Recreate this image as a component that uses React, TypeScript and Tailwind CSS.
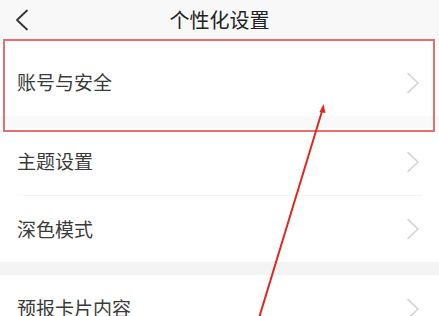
import React from "react";

const Chevron = () => (
  <svg width="14" height="22" viewBox="0 0 14 22" className="mr-[19px]">
    <path d="M2 1.5 L12 11 L2 20.5" fill="none" stroke="#d2d2d2" strokeWidth="1.6" strokeLinecap="round" strokeLinejoin="round" />
  </svg>
);

const Row = ({ label, h = "h-[67px]" }: { label: string; h?: string }) => (
  <div className={`flex items-center justify-between bg-white ${h}`}>
    <span className="pl-[17px] text-[19px] text-[#3a3a3a]">{label}</span>
    <Chevron />
  </div>
);

export default function App() {
  return (
    <div
      className="relative w-[439px] h-[316px] overflow-hidden bg-white"
      style={{ fontFamily: '"Noto Sans CJK SC", "Noto Sans", sans-serif' }}
    >
      <div className="relative flex h-[39px] items-center justify-center bg-[#f8f8f8]">
        <svg width="14" height="22" viewBox="0 0 14 22" className="absolute left-[15px] top-[9px]">
          <path d="M12 1.5 L2 11 L12 20.5" fill="none" stroke="#333" strokeWidth="1.8" strokeLinecap="round" strokeLinejoin="round" />
        </svg>
        <span className="text-[20px] text-[#222222]">个性化设置</span>
      </div>
      <div className="flex flex-col">
        <div className="flex items-center justify-between bg-white h-[77px] pt-[10px]">
          <span className="pl-[17px] text-[19px] text-[#3a3a3a]">账号与安全</span>
          <Chevron />
        </div>
        <div className="h-[12px] bg-[#f9f9f9]" />
        <Row label="主题设置" />
        <div className="mx-[17px] h-px bg-[#f3f3f3]" />
        <Row label="深色模式" h="h-[66px]" />
        <div className="h-[13px] bg-[#f4f4f4]" />
        <Row label="预报卡片内容" />
      </div>

      {/* annotation overlay */}
      <div className="absolute left-[3px] top-[39px] h-[93px] w-[432px] border-2 border-[#e27070]" />
      <svg className="absolute left-0 top-0" width="439" height="316" viewBox="0 0 439 316">
        <line x1="323" y1="108" x2="259" y2="318" stroke="#e0261f" strokeWidth="2" />
        <path d="M323.5 104 L319.5 112 L325.5 113 Z" fill="#e0261f" />
      </svg>
    </div>
  );
}
